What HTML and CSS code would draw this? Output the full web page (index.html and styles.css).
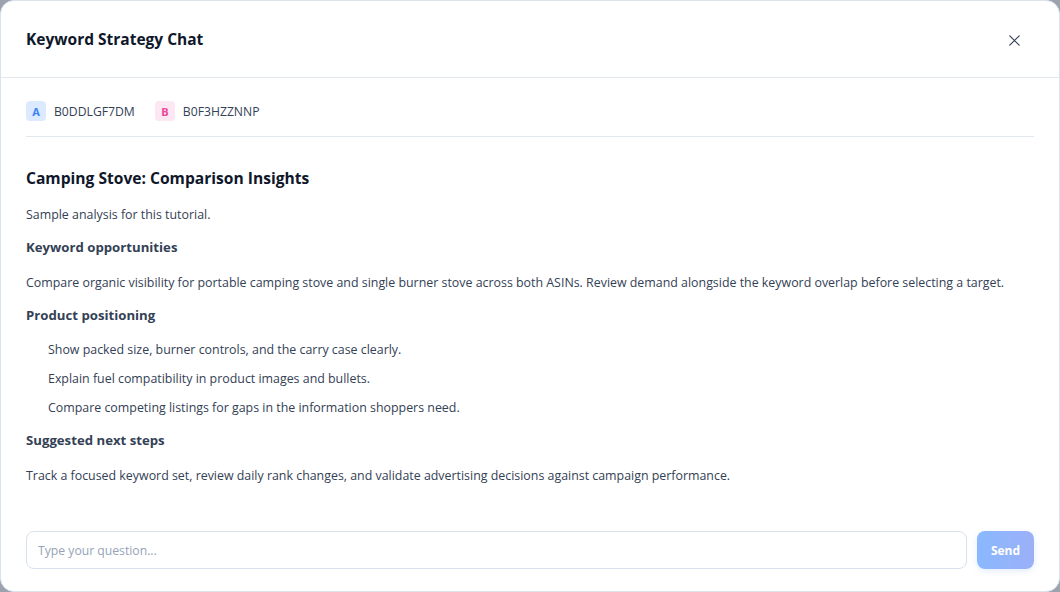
FILE: index.html
```html
<!DOCTYPE html>
<html lang="en">
<head>
  <meta charset="UTF-8" />
  <title>Keyword Strategy Chat</title>
  <link rel="stylesheet" href="styles.css">
</head>
<body>
  <div class="modal">
    <header class="modal-head">
      <h1>Keyword Strategy Chat</h1>
      <button class="close" aria-label="Close">
        <svg width="11" height="11" viewBox="0 0 11 11"><path d="M0.8 0.8L10.2 10.2M10.2 0.8L0.8 10.2" stroke="#334155" stroke-width="1.2" stroke-linecap="round"/></svg>
      </button>
    </header>

    <div class="modal-body">
      <div class="asins">
        <span class="asin"><span class="badge badge-a">A</span>B0DDLGF7DM</span>
        <span class="asin"><span class="badge badge-b">B</span>B0F3HZZNNP</span>
      </div>

      <article class="answer">
        <h2>Camping Stove: Comparison Insights</h2>
        <p class="intro">Sample analysis for this tutorial.</p>
        <h3>Keyword opportunities</h3>
        <p>Compare organic visibility for portable camping stove and single burner stove across both ASINs. Review demand alongside the keyword overlap before selecting a target.</p>
        <h3>Product positioning</h3>
        <ul>
          <li>Show packed size, burner controls, and the carry case clearly.</li>
          <li>Explain fuel compatibility in product images and bullets.</li>
          <li>Compare competing listings for gaps in the information shoppers need.</li>
        </ul>
        <h3>Suggested next steps</h3>
        <p>Track a focused keyword set, review daily rank changes, and validate advertising decisions against campaign performance.</p>
      </article>
    </div>

    <form class="composer">
      <input type="text" placeholder="Type your question..." />
      <button type="button" class="send" disabled>Send</button>
    </form>
  </div>
</body>
</html>
```

FILE: styles.css
```css
body, html {
  margin: 0;
  padding: 0;
  height: 100%;
  overflow: hidden;
  background: #9ca3af;
  font-family: 'Open Sans', sans-serif;
  color: #334155;
}

.modal {
  box-sizing: border-box;
  height: 592px;
  background: #fff;
  border: 1px solid #dbe3ee;
  border-radius: 14px;
  display: flex;
  flex-direction: column;
}

.modal-head {
  height: 76px;
  flex-shrink: 0;
  border-bottom: 1px solid #e2e8f0;
  display: flex;
  align-items: center;
  justify-content: space-between;
  padding: 0 25px;
}

.modal-head h1 {
  margin: 0;
  font-size: 15.5px;
  font-weight: 700;
  color: #0f172a;
}

.close {
  background: none;
  border: none;
  padding: 0;
  width: 24px;
  height: 24px;
  display: flex;
  align-items: center;
  justify-content: center;
  margin-right: 8px;
  margin-top: 2px;
}

.modal-body {
  flex: 1;
  padding: 0 25px;
}

.asins {
  display: flex;
  gap: 20px;
  align-items: center;
  padding: 23px 0 15px;
  border-bottom: 1px solid #e2e8f0;
  font-size: 12.2px;
  color: #334155;
}

.asin {
  display: flex;
  align-items: center;
  gap: 8px;
}

.badge {
  width: 20px;
  height: 20px;
  border-radius: 4px;
  display: flex;
  align-items: center;
  justify-content: center;
  font-size: 11px;
  font-weight: 700;
}

.badge-a {
  background: #dbeafe;
  color: #3b82f6;
}

.badge-b {
  background: #fce7f3;
  color: #ec4899;
}

.answer {
  padding-top: 30px;
  font-size: 12.4px;
  color: #334155;
}

.answer h2 {
  margin: 0 0 17px;
  font-size: 15.6px;
  font-weight: 700;
  color: #0f172a;
}

.answer h3 {
  margin: 0;
  font-size: 13.2px;
  font-weight: 700;
  color: #334155;
  line-height: 18px;
}

.answer p {
  margin: 0;
  line-height: 18px;
}

.answer .intro {
  margin-bottom: 14px;
}

.answer h3 + p {
  margin-top: 18px;
  margin-bottom: 14px;
}

.answer ul {
  list-style: none;
  padding: 0 0 0 22px;
  margin: 17px 0 14px;
}

.answer li {
  line-height: 18px;
  margin-bottom: 11px;
}

.composer {
  display: flex;
  gap: 10px;
  padding: 0 25px 22px;
}

.composer input {
  flex: 1;
  height: 38px;
  box-sizing: border-box;
  border: 1px solid #d7e2ee;
  border-radius: 8px;
  padding: 0 11px;
  font-family: 'Open Sans', sans-serif;
  font-size: 12.2px;
  color: #334155;
  outline: none;
}

.composer input::placeholder {
  color: #94a3b8;
}

.send {
  width: 57px;
  height: 38px;
  border: none;
  border-radius: 8px;
  background: linear-gradient(90deg, #8ab8ff, #9bb0f7);
  color: #fff;
  font-family: 'Open Sans', sans-serif;
  font-size: 12px;
  font-weight: 700;
  box-shadow: 0 2px 6px rgba(59, 130, 246, 0.15);
}
```
